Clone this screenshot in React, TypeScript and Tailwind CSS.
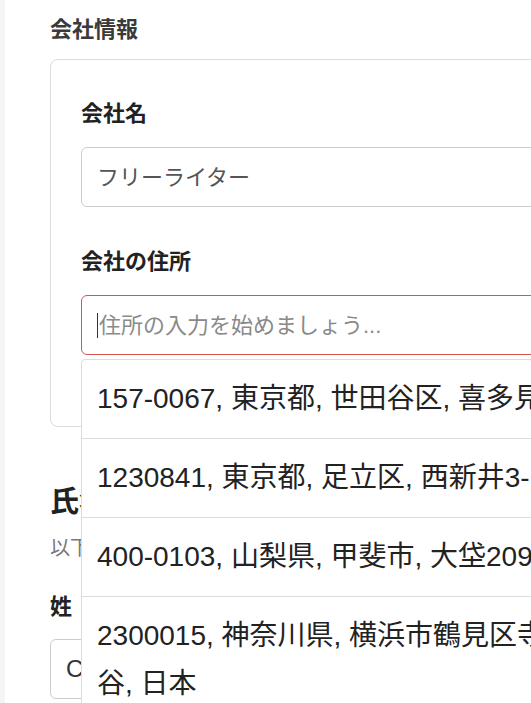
import React from 'react';

const suggestions = [
  '157-0067, 東京都, 世田谷区, 喜多見',
  '1230841, 東京都, 足立区, 西新井3-1',
  '400-0103, 山梨県, 甲斐市, 大垈2093',
  '2300015, 神奈川県, 横浜市鶴見区寺谷, 日本',
];

const Label: React.FC<{ children: React.ReactNode }> = ({ children }) => (
  <div className="text-[22px] leading-[32px] font-bold text-[#222]">{children}</div>
);

const CompanyCard: React.FC = () => (
  <div className="mt-[13px] w-[555px] rounded-[8px] border border-[#dcdcdc] px-[30px] pt-[38px] pb-[71px]">
    {/* Company name */}
    <Label>会社名</Label>
    <div className="mt-[17px] flex h-[60px] items-center rounded-[6px] border border-[#cccccc] px-[15px] text-[22px] text-[#555]">
      フリーライター
    </div>

    {/* Address with autocomplete */}
    <div className="mt-[39px]">
      <Label>会社の住所</Label>
    </div>
    <div className="relative mt-[17px]">
      <div className="flex h-[60px] items-center rounded-[6px] border border-[#d9534f] px-[15px] text-[22px] text-[#8a8a8a]">
        <span className="mr-[1px] h-[25px] w-px bg-[#333]" />
        住所の入力を始めましょう...
      </div>
      <ul className="absolute left-0 top-[calc(100%+4px)] z-10 w-full rounded-[4px] border border-[#dcdcdc] bg-white">
        {suggestions.map((s, i) => (
          <li
            key={s}
            className={`px-[15px] py-[15px] text-[28px] leading-[48px] text-[#222] ${
              i < suggestions.length - 1 ? 'border-b border-[#dcdcdc]' : ''
            }`}
          >
            {s}
          </li>
        ))}
      </ul>
    </div>
  </div>
);

export default function App() {
  return (
    <div className="flex h-[703px] w-[531px] overflow-hidden bg-white font-['Liberation_Sans','Noto_Sans_CJK_JP',sans-serif]">
      <div className="w-[5px] shrink-0 bg-[#f5f5f5]" />
      <main className="w-[1000px] shrink-0 pl-[45px] pt-[14px]">
        <h3 className="text-[22px] leading-[32px] font-bold text-[#3a3a3a]">会社情報</h3>
        <CompanyCard />

        {/* Personal name section */}
        <h2 className="mt-[55px] text-[29px] leading-[40px] font-bold text-[#222]">氏名</h2>
        <p className="mt-[12px] text-[20px] leading-[28px] text-[#777]">以下の情報を入力してください。</p>
        <div className="mt-[29px]">
          <Label>姓</Label>
        </div>
        <div className="mt-[16px] flex h-[60px] w-[555px] items-center rounded-[6px] border border-[#cccccc] px-[15px] text-[24px] text-[#333]">
          Chen
        </div>
      </main>
    </div>
  );
}
